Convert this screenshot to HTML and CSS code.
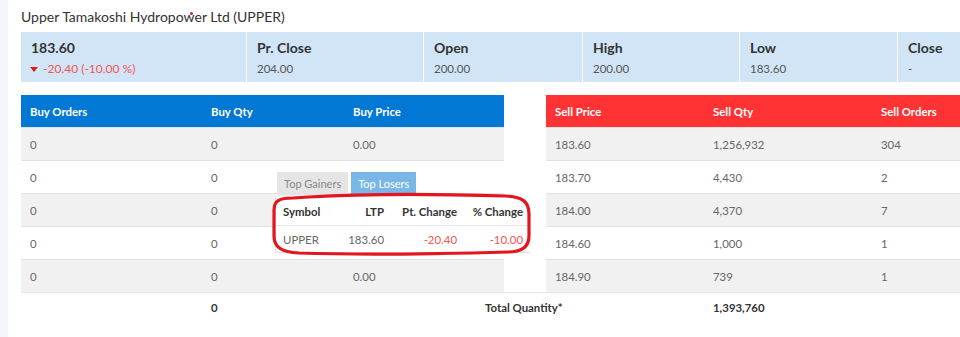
FILE: index.html
```html
<!DOCTYPE html>
<html>
<head>
<meta charset="utf-8">
<link rel="stylesheet" href="styles.css">
</head>
<body>
<div class="page">
  <h1 class="title">Upper Tamakoshi Hydropo<span class="dotwrap">w<span class="dot"></span></span>er Ltd (UPPER)</h1>
  <div class="stats">
    <div class="stat s1">
      <div class="stat-h">183.60</div>
      <div class="stat-v down"><span class="tri"></span>-20.40 (-10.00 %)</div>
    </div>
    <div class="stat s2"><div class="stat-h">Pr. Close</div><div class="stat-v">204.00</div></div>
    <div class="stat s3"><div class="stat-h">Open</div><div class="stat-v">200.00</div></div>
    <div class="stat s4"><div class="stat-h">High</div><div class="stat-v">200.00</div></div>
    <div class="stat s5"><div class="stat-h">Low</div><div class="stat-v">183.60</div></div>
    <div class="stat s6"><div class="stat-h">Close</div><div class="stat-v">-</div></div>
  </div>

  <div class="books">
    <div class="book buy">
      <div class="row head"><div>Buy Orders</div><div>Buy Qty</div><div>Buy Price</div></div>
      <div class="row odd"><div>0</div><div>0</div><div>0.00</div></div>
      <div class="row"><div>0</div><div>0</div><div>0.00</div></div>
      <div class="row odd"><div>0</div><div>0</div><div>0.00</div></div>
      <div class="row"><div>0</div><div>0</div><div>0.00</div></div>
      <div class="row odd"><div>0</div><div>0</div><div>0.00</div></div>
    </div>
    <div class="book sell">
      <div class="row head"><div>Sell Price</div><div>Sell Qty</div><div>Sell Orders</div></div>
      <div class="row odd"><div>183.60</div><div>1,256,932</div><div>304</div></div>
      <div class="row"><div>183.70</div><div>4,430</div><div>2</div></div>
      <div class="row odd"><div>184.00</div><div>4,370</div><div>7</div></div>
      <div class="row"><div>184.60</div><div>1,000</div><div>1</div></div>
      <div class="row odd"><div>184.90</div><div>739</div><div>1</div></div>
    </div>
  </div>
  <div class="total">
    <div></div><div>0</div><div></div><div>Total Quantity*</div><div>1,393,760</div>
  </div>

  <div class="popup">
    <div class="tabs">
      <div class="tab">Top Gainers</div>
      <div class="tab active">Top Losers</div>
    </div>
    <div class="panel">
      <div class="prow phead"><div>Symbol</div><div class="r">LTP</div><div class="r">Pt. Change</div><div class="r">% Change</div></div>
      <div class="prow"><div>UPPER</div><div class="r">183.60</div><div class="r neg">-20.40</div><div class="r neg">-10.00</div></div>
    </div>
    <svg class="ring" width="266" height="66" viewBox="0 0 266 66">
      <path d="M40 5 C90 2 170 2 237 4 C254 5 260 10 260 22 L260 44 C260 55 253 60 239 60 C170 62 90 63 30 61 C12 60 5 55 5 44 L5 18 C5 9 10 6 24 6 Z" fill="none" stroke="#e3161f" stroke-width="3.2" stroke-linejoin="round"/>
    </svg>
  </div>
</div>
</body>
</html>
```

FILE: styles.css
```css
html, body {
  margin: 0;
  padding: 0;
}
body {
  background: #f3f5f8;
  font-family: Lato, "Open Sans", sans-serif;
  width: 960px;
  height: 337px;
  overflow: hidden;
}
.page {
  position: relative;
  margin-left: 8px;
  background: #fff;
  height: 337px;
  padding: 0 0 0 13px;
  width: 1100px;
}
.title {
  margin: 0;
  padding-top: 8px;
  height: 24px;
  font-size: 14px;
  font-weight: 400;
  color: #333;
  line-height: 18px;
}
.dotwrap { position: relative; }
.dot {
  position: absolute;
  left: 6px;
  top: 4px;
  width: 3px;
  height: 3px;
  border-radius: 50%;
  background: #e32020;
}
.stats {
  display: flex;
  height: 50px;
}
.stat {
  background: #d1e5f6;
  border-right: 1px solid #fff;
  padding: 7px 0 0 10px;
  box-sizing: border-box;
}
.s1 { width: 226px; }
.s2 { width: 177px; }
.s3 { width: 159px; }
.s4 { width: 157px; }
.s5 { width: 158px; }
.s6 { width: 160px; }
.stat-h {
  font-size: 14px;
  font-weight: 700;
  color: #333;
  line-height: 18px;
}
.stat-v {
  font-size: 11.5px;
  color: #555;
  line-height: 16px;
  margin-top: 4px;
  display: flex;
  align-items: center;
}
.stat-v.down { color: #f25555; font-size: 12px; }
.tri {
  width: 0;
  height: 0;
  border-left: 4px solid transparent;
  border-right: 4px solid transparent;
  border-top: 5px solid #e01818;
  margin-right: 5px;
  margin-left: -1px;
}
.books {
  display: flex;
  gap: 42px;
  margin-top: 13px;
}
.book { width: 483px; }
.row {
  display: grid;
  height: 33px;
  box-sizing: border-box;
  border-top: 1px solid #dfe3e8;
  align-items: center;
  font-size: 11.4px;
  color: #666;
}
.row > div { padding-left: 9px; }
.buy .row { grid-template-columns: 181px 142px 1fr; }
.sell .row { grid-template-columns: 158px 168px 1fr; }
.row.head {
  height: 32px;
  border-top: none;
  color: #fff;
  font-weight: 700;
}
.buy .head { background: #0078d4; }
.sell .head { background: #ff3333; }
.row.odd { background: #f1f1f1; }
.total {
  display: grid;
  grid-template-columns: 181px 142px 132px 228px 200px;
  height: 28px;
  align-items: center;
  font-size: 11.4px;
  font-weight: 700;
  color: #333;
  border-top: 1px solid #e4e7eb;
}
.total > div { padding-left: 9px; }

.popup {
  position: absolute;
  left: 267px;
  top: 172px;
  width: 255px;
}
.tabs {
  display: flex;
  gap: 3px;
  padding-left: 2px;
  height: 23px;
}
.tab {
  background: #e5e5e5;
  color: #888;
  font-size: 11px;
  padding: 0 7px;
  line-height: 23px;
}
.tab.active {
  background: #79b7e9;
  color: #fff;
}
.panel {
  margin-top: 2px;
  background: #fff;
  height: 55px;
  border-left: 1px solid #e2e2e2;
  border-bottom: 1px solid #e2e2e2;
}
.prow {
  display: grid;
  grid-template-columns: 58px 43px 73px 66px;
  padding-left: 7px;
  height: 26px;
  align-items: center;
  font-size: 11.4px;
  color: #666;
}
.prow.phead {
  height: 28px;
  color: #333;
  font-weight: 700;
  border-bottom: 1px solid #e6e6e6;
}
.r { text-align: right; }
.neg { color: #f25555; }
.ring {
  position: absolute;
  left: -6px;
  top: 20px;
}
```
